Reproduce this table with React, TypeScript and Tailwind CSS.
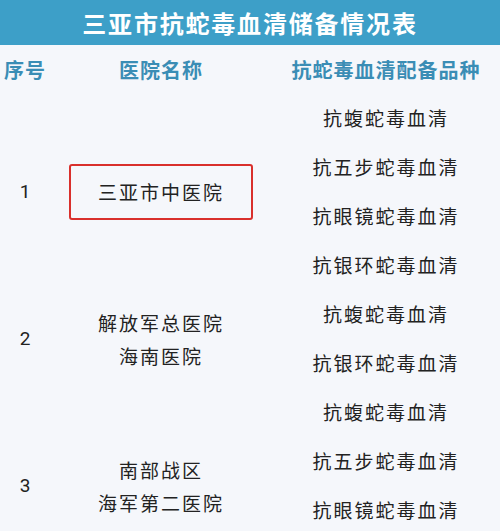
const font = { fontFamily: '"Noto Sans CJK SC", "Liberation Sans", sans-serif' }

type Group = { no: string; names: string[]; serums: string[]; boxed?: boolean; extraRows?: number }

const groups: Group[] = [
  {
    no: '1',
    names: ['三亚市中医院'],
    serums: ['抗蝮蛇毒血清', '抗五步蛇毒血清', '抗眼镜蛇毒血清', '抗银环蛇毒血清'],
    boxed: true
  },
  {
    no: '2',
    names: ['解放军总医院', '海南医院'],
    serums: ['抗蝮蛇毒血清', '抗银环蛇毒血清']
  },
  {
    // the table continues below the screenshot edge
    no: '3',
    names: ['南部战区', '海军第二医院'],
    serums: ['抗蝮蛇毒血清', '抗五步蛇毒血清', '抗眼镜蛇毒血清'],
    extraRows: 1
  }
]

export default function App() {
  return (
    <div className="w-[500px] h-[531px] overflow-hidden bg-[#f5f7fb]" style={font}>
      <div className="h-[45px] bg-[#3d9fc8] flex items-center justify-center">
        <h1 className="text-[24px] font-bold text-white tracking-[1.8px] leading-none">
          三亚市抗蛇毒血清储备情况表
        </h1>
      </div>

      <div className="flex h-[49px] items-center text-[20px] font-semibold text-[#3a8db5] leading-none">
        <div className="w-[50px] text-center tracking-[1px]">序号</div>
        <div className="w-[222px] text-center tracking-[1px]">医院名称</div>
        <div className="flex-1 text-center tracking-[1px]">抗蛇毒血清配备品种</div>
      </div>

      {groups.map((g) => (
        <div key={g.no} className="flex text-[#222] text-[19px]">
          <div className="w-[50px] flex items-center justify-center pt-[1px]" style={{ fontFamily: 'Roboto, sans-serif' }}>
            {g.no}
          </div>
          <div className="w-[222px] flex items-center justify-center">
            {g.boxed ? (
              <div className="w-[184px] h-[56px] border-2 border-[#d9302c] rounded-[3px] flex items-center justify-center tracking-[2px]">
                {g.names[0]}
              </div>
            ) : (
              <div className="flex flex-col items-center leading-[33px] tracking-[2px]">
                {g.names.map((n) => (
                  <span key={n}>{n}</span>
                ))}
              </div>
            )}
          </div>
          <div className="flex-1 flex flex-col">
            {g.serums.map((s) => (
              <div key={s} className="h-[49px] flex items-center justify-center tracking-[2px]">
                {s}
              </div>
            ))}
            {g.extraRows ? <div className="h-[49px]" /> : null}
          </div>
        </div>
      ))}
    </div>
  )
}
